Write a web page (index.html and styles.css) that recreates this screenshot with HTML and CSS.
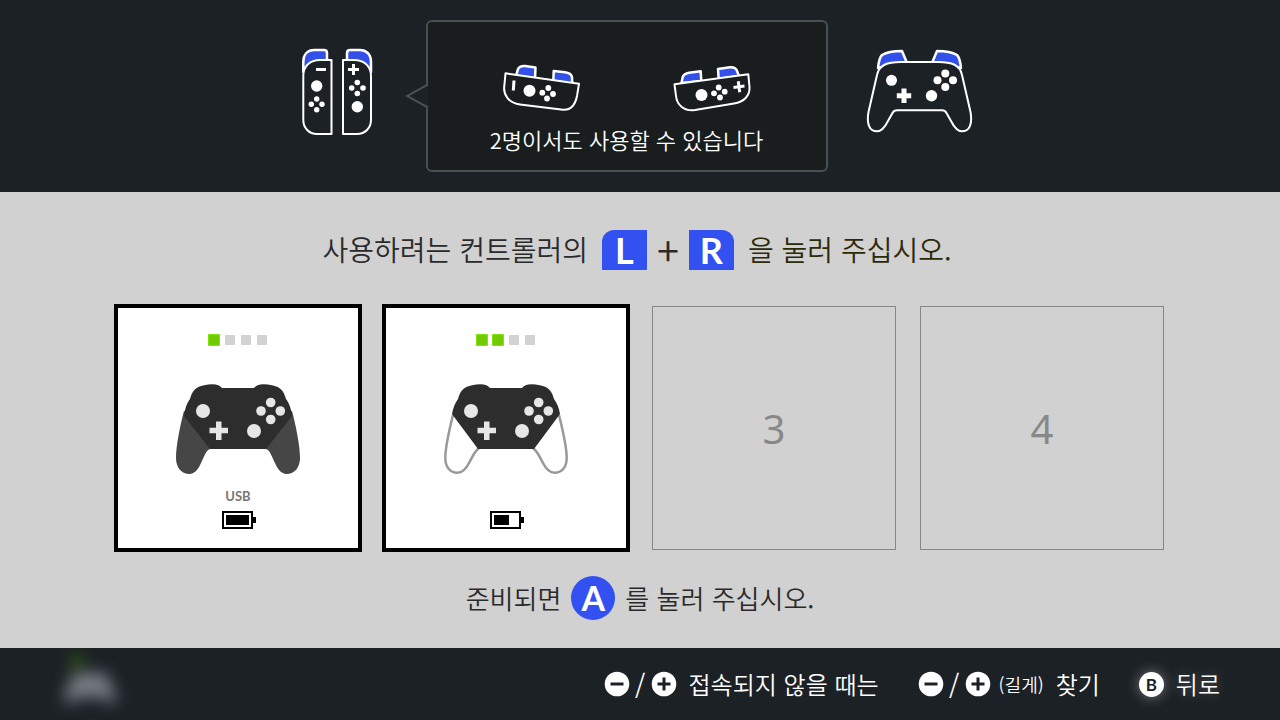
FILE: index.html
```html
<!DOCTYPE html>
<html lang="ko">
<head>
<meta charset="utf-8">
<title>컨트롤러</title>
<link rel="stylesheet" href="styles.css">
</head>
<body>
<header class="styles-bar">
  <svg class="outline" width="72" height="96" viewBox="0 0 72 96" role="img" aria-label="Joy-Con">
    <path class="trigger" d="M1.3 24V14C1.3 6 6 2 12 2H22Q25 2 25 5V14H14Q5 16 1.3 24Z"/>
    <path class="trigger" d="M69 24V14C69 6 64 2 58 2H48Q45 2 45 5V14H56Q65 16 69 24Z"/>
    <path class="shell" d="M29.5 12H18C8 12 1.3 18 1.3 28V72C1.3 80 7 86 15 86H29.5Z"/>
    <path class="shell" d="M41 12H52C62 12 69 18 69 28V72C69 80 63 86 55 86H41Z"/>
    <path class="mark" d="M14 21.5H24M46 21.5H57M51.500 16V27"/>
    <g class="dots"><circle cx="14.700" cy="38" r="5.700"/><circle cx="14.700" cy="51" r="2.700"/><circle cx="9.300" cy="56.300" r="2.700"/><circle cx="20" cy="56.300" r="2.700"/><circle cx="14.700" cy="61.700" r="2.700"/>
    <circle cx="55.300" cy="58.700" r="5.700"/><circle cx="55.300" cy="34.500" r="2.800"/><circle cx="49.700" cy="40" r="2.800"/><circle cx="61" cy="40" r="2.800"/><circle cx="55.300" cy="45.500" r="2.800"/></g>
  </svg>

  <section class="bubble">
    <svg class="bubble-tail" width="24" height="26" viewBox="0 0 24 26" aria-hidden="true"><path d="M23 1.500L2 13L23 24.500"/></svg>
    <div class="pair">
      <svg class="outline" width="78" height="48" viewBox="0 0 78 48" role="img" aria-label="Joy-Con (L)">
        <path class="trigger" d="M13 12L15 5Q17 1.500 22 2L32.500 3.500L32 15ZM50.300 17L50.700 7L62 8.300Q68 9 69 13L69.300 20Z"/>
        <path class="shell" d="M2.500 9.300L76 19.700L74 32C72 42 67 47 58 45.500L17 40.500C6 39 0 31 1.300 22Z"/>
        <path class="mark" d="M11 16.500L10.300 26.500"/>
        <g class="dots"><circle cx="26.500" cy="26.700" r="6"/><circle cx="45.300" cy="24" r="2.900"/><circle cx="39.300" cy="28.700" r="2.900"/><circle cx="50" cy="30" r="2.900"/><circle cx="44" cy="34.500" r="2.900"/></g>
      </svg>
      <svg class="outline" width="78" height="48" viewBox="0 0 78 48" role="img" aria-label="Joy-Con (R)">
        <path class="trigger" d="M8.500 19L9.700 13Q11 9.500 16 8.700L27.700 7.300L28.300 17ZM45.700 15L45 5L57 3.300Q63 3 64 7L66 12Z"/>
        <path class="shell" d="M1.500 20.300L75.300 10.300L76.500 23C77 32 71 38 61 39.500L22 46C11 47.500 4 41 3 32Z"/>
        <path class="mark" d="M60.500 23.500L71.500 22M65.300 17.200L66.700 28.200"/>
        <g class="dots"><circle cx="28.500" cy="31" r="6"/><circle cx="45.700" cy="23.500" r="2.900"/><circle cx="41" cy="29.300" r="2.900"/><circle cx="51.700" cy="27.700" r="2.900"/><circle cx="47" cy="33.500" r="2.900"/></g>
      </svg>
    </div>
    <p class="bubble-text">2명이서도 사용할 수 있습니다</p>
  </section>

  <svg class="outline" width="108" height="96" viewBox="0 0 108 96" role="img" aria-label="Pro">
    <path class="trigger" d="M12 20Q13 10 16 7C21 4 29 3 36 3L41 15ZM95 20Q94 10 91 7C86 4 78 3 71 3L66 15Z"/>
    <path class="shell" d="M35 14H72C86 14 94 17 96 27L104.500 64C106.500 75 104 83.300 96 83.300C91 83.300 88 79 85 73L80.500 65Q79 62.300 76 62.300H31Q28 62.300 26.500 65L22 73C19 79 16 83.300 11 83.300C3 83.300 .5 75 2.500 64L11 27C13 17 21 14 35 14Z"/>
    <g class="dots"><circle cx="25.500" cy="32.300" r="5.500"/><circle cx="65.500" cy="47.700" r="5.700"/><circle cx="79.300" cy="25.500" r="4"/><circle cx="71.500" cy="32.300" r="4"/><circle cx="87" cy="32.300" r="4"/><circle cx="79.300" cy="39" r="4"/><path d="M35.500 40.500H40.500V45.200H45.200V50.200H40.500V55H35.500V50.200H30.800V45.200H35.500Z"/></g>
  </svg>
</header>

<main class="stage">
  <p class="prompt prompt-large">
    <span>사용하려는 컨트롤러의</span>
    <span class="combo"><kbd class="key key-l">L</kbd><span class="plus">+</span><kbd class="key key-r">R</kbd></span>
    <span class="warm">을 눌러 주십시오.</span>
  </p>

  <div class="slots">
    <section class="slot filled">
      <div class="pips"><i class="on"></i><i></i><i></i><i></i></div>
      <svg class="pad" width="124" height="92" viewBox="0 0 124 92" role="img" aria-label="Pro">
        <path fill="#464646" d="M34 66C30 67 28 74 25 80C22 87 18 91 13.500 91C5 91 0 84 0 75C0 63 4 43 8 28L62 32L116 28C120 43 124 63 124 75C124 84 119 91 110.500 91C106 91 102 87 99 80C96 74 94 67 90 66Z"/>
        <path class="pad-body" d="M34 66L8 33C9 25 11 20 14 16C16 8 20 4 27 2.500Q42 -1 46 5H78Q82 -1 97 2.500C104 4 108 8 110 16C113 20 115 25 116 33L90 66Z"/>
        <g class="pad-buttons"><circle cx="27" cy="28" r="7"/><circle cx="78" cy="48" r="7"/><circle cx="94.700" cy="19.500" r="4.800"/><circle cx="85" cy="28" r="4.800"/><circle cx="104.300" cy="28" r="4.800"/><circle cx="94.700" cy="36.500" r="4.800"/><path d="M40 38.500H45.500V44.700H52V50.300H45.500V57H40V50.300H33.500V44.700H40Z"/></g>
      </svg>
      <span class="link-type">USB</span>
      <svg class="battery" width="36" height="18" viewBox="0 0 36 18" role="img" aria-label="100%"><path class="case" d="M3 1H32V17H3Z"/><path d="M6 4H29V14H6ZM33 6H36V12H33Z"/></svg>
    </section>
    <section class="slot filled">
      <div class="pips"><i class="on"></i><i class="on"></i><i></i><i></i></div>
      <svg class="pad" width="124" height="92" viewBox="0 0 124 92" role="img" aria-label="Pro">
        <path fill="none" stroke="#999" stroke-width="2.500" d="M35 65.500C31 67 29 73 25 80C22 86 18 89.700 13.500 89.700C6 89.700 1.300 84 1.300 75C1.300 63 5 48 9 32M89 65.500C93 67 95 73 99 80C102 86 106 89.700 110.500 89.700C118 89.700 122.700 84 122.700 75C122.700 63 119 48 115 32"/>
        <path class="pad-body" d="M34 66L8 31C9 25 11 20 14 16C16 8 20 4 27 2.500Q42 -1 46 5H78Q82 -1 97 2.500C104 4 108 8 110 16C113 20 115 25 116 31L90 66Z"/>
        <g class="pad-buttons"><circle cx="27" cy="28" r="7"/><circle cx="78" cy="48" r="7"/><circle cx="94.700" cy="19.500" r="4.800"/><circle cx="85" cy="28" r="4.800"/><circle cx="104.300" cy="28" r="4.800"/><circle cx="94.700" cy="36.500" r="4.800"/><path d="M40 38.500H45.500V44.700H52V50.300H45.500V57H40V50.300H33.500V44.700H40Z"/></g>
      </svg>
      <span class="link-type"></span>
      <svg class="battery" width="36" height="18" viewBox="0 0 36 18" role="img" aria-label="60%"><path class="case" d="M3 1H32V17H3Z"/><path d="M6 4H21V14H6ZM33 6H36V12H33Z"/></svg>
    </section>
    <section class="slot empty">3</section>
    <section class="slot empty">4</section>
  </div>

  <p class="prompt">
    <span>준비되면</span>
    <kbd class="key-a">A</kbd>
    <span>를 눌러 주십시오.</span>
  </p>
</main>

<footer class="footer">
  <svg class="ghost" width="60" height="56" viewBox="0 0 60 56" aria-hidden="true">
    <circle cx="17" cy="5" r="6" fill="#39720c"/>
    <path fill="#7a7e86" d="M14 17H46L56 40Q56 50 48 46L41 41H20L12 46Q4 50 4 40Z"/>
  </svg>
  <nav class="actions">
    <button class="action" type="button">
      <span class="keys"><svg class="round" width="26" height="26" viewBox="0 0 26 26" aria-hidden="true"><circle cx="13" cy="13" r="12.300"/><path d="M6.500 13H19.500"/></svg><span class="slash">/</span><svg class="round" width="26" height="26" viewBox="0 0 26 26" aria-hidden="true"><circle cx="13" cy="13" r="12.300"/><path d="M6.500 13H19.500M13 6.500V19.500"/></svg></span>
      <span>접속되지 않을 때는</span>
    </button>
    <button class="action" type="button">
      <span class="keys"><svg class="round" width="26" height="26" viewBox="0 0 26 26" aria-hidden="true"><circle cx="13" cy="13" r="12.300"/><path d="M6.500 13H19.500"/></svg><span class="slash">/</span><svg class="round" width="26" height="26" viewBox="0 0 26 26" aria-hidden="true"><circle cx="13" cy="13" r="12.300"/><path d="M6.500 13H19.500M13 6.500V19.500"/></svg><small class="hold">(길게)</small></span>
      <span>찾기</span>
    </button>
    <button class="action back" type="button">
      <kbd class="key-b">B</kbd>
      <span>뒤로</span>
    </button>
  </nav>
</footer>
</body>
</html>
```

FILE: styles.css
```css
* {
  box-sizing: border-box;
}

body {
  margin: 0;
  min-height: 100vh;
  display: flex;
  flex-direction: column;
  background: #d1d1d1;
  color: #2a2a2a;
  font-family: "Noto Sans CJK KR", "Noto Sans", sans-serif;
  font-weight: 350;
}

p {
  margin: 0;
}

kbd {
  font-family: Lato, sans-serif;
  font-weight: 700;
}

/* Supported controller styles */
.styles-bar {
  display: flex;
  align-items: center;
  justify-content: center;
  min-height: 192px;
  padding: 20px 5px 20px 0;
  background: #1c2126;
  color: #fff;
}

.outline {
  flex: none;
  stroke-linejoin: round;
}

.trigger {
  fill: #3350e8;
  stroke: #fff;
  stroke-width: 2.5;
}

.shell {
  fill: #1c2126;
  stroke: #fff;
  stroke-width: 2;
}

.bubble .shell {
  fill: #191d1e;
}

.mark {
  fill: none;
  stroke: #fff;
  stroke-width: 3;
}

.dots {
  fill: #fff;
}

.bubble {
  position: relative;
  width: 402px;
  margin: 0 38px 0 52px;
  padding: 42px 0 15px;
  display: flex;
  flex-direction: column;
  align-items: center;
  gap: 11px;
  border: 2px solid #475052;
  border-radius: 6px;
  background: #191d1e;
}

.bubble-tail {
  position: absolute;
  left: -23px;
  top: 61px;
  fill: #1c2126;
  stroke: #475052;
  stroke-width: 2;
}

.pair {
  display: flex;
  gap: 92px;
}

.bubble-text {
  font-size: 22px;
  line-height: 32px;
}

/* Registration area */
.stage {
  flex: 1;
  display: flex;
  flex-direction: column;
  align-items: center;
  padding: 38px 24px 28px;
}

.prompt {
  display: flex;
  align-items: center;
  justify-content: center;
  gap: 10px;
  font-size: 26px;
  line-height: 44px;
}

.prompt-large {
  align-items: flex-start;
  gap: 14px;
  padding-right: 6px;
  font-size: 28px;
  line-height: 38px;
}

.warm {
  color: #2b2a08;
}

.combo {
  display: flex;
  gap: 10px;
}

.key {
  width: 45px;
  height: 40px;
  background: #3350f0;
  color: #fff;
  font-size: 36px;
  line-height: 40px;
  text-align: center;
}

.key-l {
  border-top-left-radius: 12px;
}

.key-r {
  border-top-right-radius: 12px;
}

.plus {
  font-size: 40px;
}

.key-a {
  width: 44px;
  height: 44px;
  border-radius: 50%;
  background: #3350f0;
  color: #fff;
  font-size: 34px;
  line-height: 44px;
  text-align: center;
}

.slots {
  width: 100%;
  max-width: 1052px;
  margin: 34px 0 24px;
  display: grid;
  grid-template-columns: repeat(4, 1fr);
  gap: 20px;
}

.slot {
  min-height: 244px;
  display: flex;
  flex-direction: column;
  align-items: center;
}

.filled {
  aspect-ratio: 1;
  padding-top: 24px;
  border: 4px solid #000;
  background: #fff;
}

.empty {
  margin: 2px;
  justify-content: center;
  border: 1px solid #858585;
  color: #888;
  font-family: "Noto Sans", sans-serif;
  font-size: 40px;
  font-weight: 400;
}

.pips {
  display: grid;
  grid-template-columns: repeat(4, 16px);
  height: 16px;
  place-items: center;
}

.pips i {
  width: 10px;
  height: 10px;
  background: #d2d2d2;
}

.pips .on {
  width: 12px;
  height: 12px;
  border: 1px solid #84e312;
  background: #70cc00;
}

.pad {
  margin-top: 35px;
}

.pad-body {
  fill: #2d2d2d;
}

.pad-buttons {
  fill: #e6e6e6;
}

.link-type {
  height: 16px;
  margin: 13px 0 7px;
  color: #777;
  font-family: Lato, sans-serif;
  font-size: 13px;
  font-weight: 700;
  line-height: 16px;
}

.battery .case {
  fill: none;
  stroke: #000;
  stroke-width: 2;
}

/* Footer */
.footer {
  min-height: 72px;
  padding: 0 60px;
  display: flex;
  align-items: center;
  justify-content: space-between;
  overflow: hidden;
  background: #1c2126;
  color: #fff;
}

.ghost {
  filter: blur(8px);
  overflow: visible;
}

.actions {
  display: flex;
  gap: 39px;
}

.action {
  display: flex;
  align-items: center;
  gap: 12px;
  padding: 0;
  border: 0;
  background: none;
  color: inherit;
  font: inherit;
  font-size: 24px;
  line-height: 34px;
}

.keys {
  display: flex;
  align-items: center;
}

.round {
  fill: #fff;
  stroke: #1c2126;
  stroke-width: 3;
}

.round circle {
  stroke: none;
}

.slash {
  width: 21px;
  text-align: center;
  font-size: 26px;
}

.hold {
  margin-left: 8px;
  font-size: 18px;
}

.key-b {
  width: 25px;
  height: 25px;
  border-radius: 50%;
  background: #fff;
  box-shadow: 0 0 14px rgba(255, 255, 255, 0.4);
  color: #1c2126;
  font-size: 17px;
  line-height: 25px;
  text-align: center;
}

.back {
  text-shadow: 0 0 12px rgba(255, 255, 255, 0.3);
}
```
